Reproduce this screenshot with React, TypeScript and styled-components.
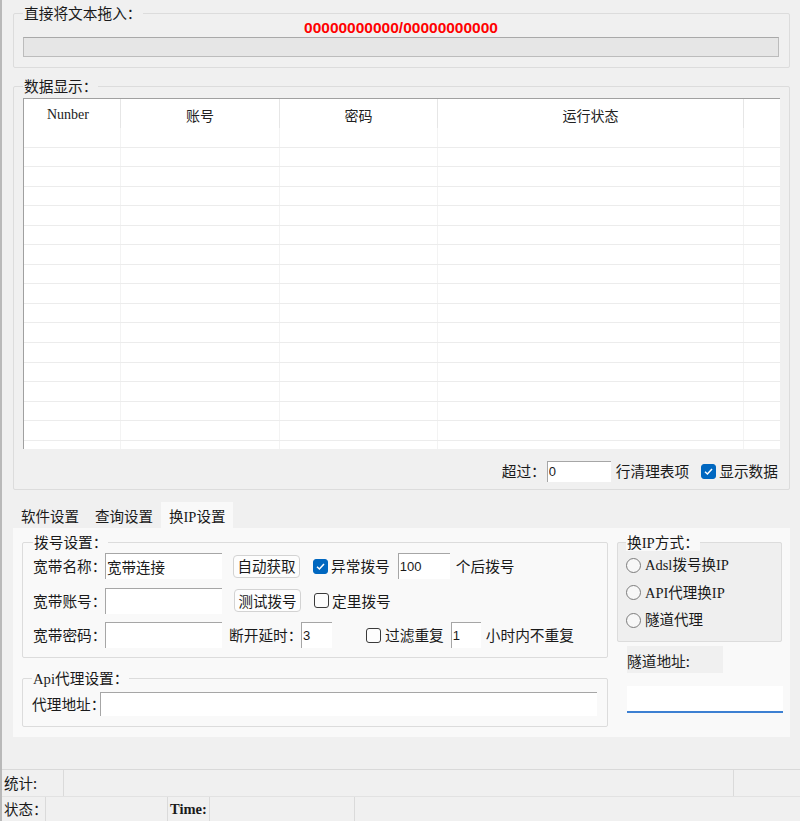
import styled, { createGlobalStyle } from 'styled-components';

const cjk = `"Noto Sans CJK SC", "Noto Sans", sans-serif`;
const serif = `"Liberation Serif", "Noto Sans CJK SC", serif`;

const GlobalStyle = createGlobalStyle`
  html, body {
    margin: 0;
    padding: 0;
    background: #f0f0f0;
  }
  #root {
    height: 821px;
  }
  * {
    box-sizing: border-box;
  }
`;

const Window = styled.div`
  width: 800px;
  height: 821px;
  display: flex;
  flex-direction: column;
  border-left: 2px solid #b9b9b9;
  background: #f0f0f0;
  font-family: ${cjk};
  font-size: 14.7px;
  color: #1a1a1a;
  overflow: hidden;
`;

const Content = styled.main`
  flex: 1;
  display: flex;
  flex-direction: column;
  padding: 5px 10px 0 11px;
`;

const Group = styled.fieldset<{ $pad: string; $bg?: string; $mt?: number }>`
  margin: ${(p) => p.$mt ?? 0}px 0 0 0;
  min-width: 0;
  padding: ${(p) => p.$pad};
  border: 1px solid #dcdcdc;
  border-radius: 2px;
  background: ${(p) => p.$bg ?? 'transparent'};
`;

const Legend = styled.legend<{ $bg?: string }>`
  padding: 0 1px;
  line-height: 16px;
  font-size: 14.7px;
  white-space: nowrap;
  background: ${(p) => p.$bg ?? 'transparent'};
`;

const Latin = styled.span<{ $bold?: boolean }>`
  font-family: ${serif};
  font-weight: ${(p) => (p.$bold ? 'bold' : 'normal')};
`;

const Counter = styled.div`
  text-align: center;
  color: #ff0000;
  font-family: "Liberation Sans", Arial, sans-serif;
  font-weight: bold;
  font-size: 15.5px;
  line-height: 13px;
`;

const Progress = styled.div`
  margin-top: 3px;
  height: 20px;
  border: 1px solid #bcbcbc;
  border-top-color: #a9a9a9;
  background: #e6e6e6;
`;

const cols = '97px 159px 158px 306px 1fr';

const Table = styled.div`
  height: 351px;
  border-top: 1px solid #a0a0a0;
  border-left: 1px solid #a0a0a0;
  background: #fff;
  overflow: hidden;
`;

const HeadRow = styled.div`
  display: grid;
  grid-template-columns: ${cols};
  height: 29px;
`;

const HeadCell = styled.div<{ $last?: boolean; $serif?: boolean }>`
  border-right: ${(p) => (p.$last ? 'none' : '1px solid #e6e6e6')};
  padding: 6px ${(p) => (p.$serif ? 8 : 0)}px 0 0;
  line-height: 20px;
  text-align: center;
  font-family: ${(p) => (p.$serif ? serif : cjk)};
  font-size: 14px;
  color: #222;
`;

const BodyRow = styled.div`
  display: grid;
  grid-template-columns: ${cols};
  height: 19.55px;
  border-bottom: 1px solid #ececec;
`;

const BodyCell = styled.div<{ $last?: boolean }>`
  border-right: ${(p) => (p.$last ? 'none' : '1px solid #f3f3f3')};
`;

const Row = styled.div<{ $h?: number; $end?: boolean; $mt?: number }>`
  display: flex;
  align-items: center;
  justify-content: ${(p) => (p.$end ? 'flex-end' : 'flex-start')};
  height: ${(p) => p.$h ?? 26}px;
  margin-top: ${(p) => p.$mt ?? 0}px;
  white-space: nowrap;
`;

const Rows = styled.div<{ $gap: number }>`
  display: flex;
  flex-direction: column;
  gap: ${(p) => p.$gap}px;
`;

const Label = styled.span<{ $w?: number; $ml?: number }>`
  flex: none;
  width: ${(p) => (p.$w ? `${p.$w}px` : 'auto')};
  margin-left: ${(p) => p.$ml ?? 0}px;
  line-height: 20px;
  white-space: nowrap;
`;

const TextBox = styled.input<{ $w: number; $h?: number; $ml?: number }>`
  flex: none;
  width: ${(p) => p.$w}px;
  height: ${(p) => p.$h ?? 26}px;
  margin: 0 0 0 ${(p) => p.$ml ?? 0}px;
  padding: 0 1px;
  border: none;
  border-top: 1px solid #a6a6a6;
  border-left: 1px solid #a6a6a6;
  background: #fff;
  outline: none;
  font-family: ${cjk};
  font-size: 14.5px;
  color: #1a1a1a;
`;

const NumBox = styled(TextBox)`
  font-family: "Liberation Sans", Arial, sans-serif;
  font-size: 13px;
`;

const Button = styled.button<{ $ml: number }>`
  flex: none;
  width: 67px;
  height: 23px;
  margin-left: ${(p) => p.$ml}px;
  padding: 0;
  border: 1px solid #d3d3d3;
  border-radius: 4px;
  background: #fdfdfd;
  font-family: ${cjk};
  font-size: 14.5px;
  line-height: 20px;
  color: #1a1a1a;
`;

const Box = styled.span<{ $checked?: boolean; $ml?: number }>`
  flex: none;
  display: inline-flex;
  align-items: center;
  justify-content: center;
  width: 15px;
  height: 15px;
  margin-left: ${(p) => p.$ml ?? 0}px;
  border-radius: 3px;
  border: 1px solid ${(p) => (p.$checked ? '#0067c0' : '#3a3a3a')};
  background: ${(p) => (p.$checked ? '#0067c0' : '#fdfdfd')};
`;

const Check = ({ checked, ml }: { checked?: boolean; ml?: number }) => (
  <Box $checked={checked} $ml={ml}>
    {checked && (
      <svg width="11" height="11" viewBox="0 0 11 11">
        <path d="M2 5.8 L4.4 8 L9 3" fill="none" stroke="#fff" strokeWidth="1.5" />
      </svg>
    )}
  </Box>
);

const TabStrip = styled.div`
  display: flex;
  margin-top: 12px;
`;

const Tab = styled.div<{ $active?: boolean }>`
  padding: 4px 8px 1px;
  line-height: 20px;
  font-size: 14.5px;
  white-space: nowrap;
  background: ${(p) => (p.$active ? '#f9f9f9' : 'transparent')};
`;

const Panel = styled.section`
  display: flex;
  gap: 9px;
  padding: 6px 8px 10px 9px;
  background: #f9f9f9;
`;

const LeftCol = styled.div`
  width: 586px;
  display: flex;
  flex-direction: column;
`;

const RightCol = styled.div`
  width: 165px;
  display: flex;
  flex-direction: column;
`;

const Radio = styled.span`
  flex: none;
  width: 15px;
  height: 15px;
  border-radius: 50%;
  border: 1px solid #7c7c7c;
  background: #f7f7f7;
  margin-right: 4px;
`;

const RadioText = styled.span`
  font-family: ${serif};
  font-size: 14.5px;
  line-height: 20px;
  white-space: nowrap;
`;

const TunnelLabel = styled.div`
  width: 96px;
  height: 27px;
  margin: 4px 0 0 10px;
  padding-top: 3px;
  line-height: 24px;
  background: #f0f0f0;
  color: #222;
  white-space: nowrap;
`;

const TunnelInput = styled.input`
  width: 156px;
  height: 27px;
  margin: 13px 0 0 10px;
  border: none;
  border-bottom: 2px solid #3d80d2;
  background: #fff;
  outline: none;
`;

const StatusBar = styled.footer`
  flex: none;
  border-top: 1px solid #d9d9d9;
`;

const StatusRow = styled.div<{ $h: number; $line?: boolean }>`
  display: flex;
  height: ${(p) => p.$h}px;
  border-top: ${(p) => (p.$line ? '1px solid #e2e2e2' : 'none')};
`;

const StatusCell = styled.div<{ $w?: number; $line?: boolean }>`
  flex: ${(p) => (p.$w ? 'none' : '1')};
  width: ${(p) => (p.$w ? `${p.$w}px` : 'auto')};
  display: flex;
  align-items: center;
  padding-left: 2px;
  border-left: ${(p) => (p.$line ? '1px solid #dadada' : 'none')};
  line-height: 20px;
  font-size: 14.5px;
  white-space: nowrap;
`;

const rows = Array.from({ length: 17 }, (_, i) => i);

const App = () => {
  return (
    <>
      <GlobalStyle />
      <Window>
        <Content>
          <Group $pad="0 10px 10px 9px">
            <Legend>直接将文本拖入：</Legend>
            <Counter>00000000000/00000000000</Counter>
            <Progress />
          </Group>

          <Group $pad="4px 9px 7px 9px" $mt={10}>
            <Legend>数据显示：</Legend>
            <Table>
              <HeadRow>
                <HeadCell $serif>Nunber</HeadCell>
                <HeadCell>账号</HeadCell>
                <HeadCell>密码</HeadCell>
                <HeadCell>运行状态</HeadCell>
                <HeadCell $last />
              </HeadRow>
              {rows.map((r) => (
                <BodyRow key={r}>
                  <BodyCell />
                  <BodyCell />
                  <BodyCell />
                  <BodyCell />
                  <BodyCell $last />
                </BodyRow>
              ))}
            </Table>
            <Row $h={22} $mt={11} $end style={{ paddingRight: 2 }}>
              <Label>超过：</Label>
              <NumBox $w={64} $h={21} $ml={1} readOnly value="0" />
              <Label $ml={5}>行清理表项</Label>
              <Check checked ml={12} />
              <Label $ml={3}>显示数据</Label>
            </Row>
          </Group>

          <TabStrip>
            <Tab>软件设置</Tab>
            <Tab>查询设置</Tab>
            <Tab $active>
              换<Latin>IP</Latin>设置
            </Tab>
          </TabStrip>

          <Panel>
            <LeftCol>
              <Group $pad="3px 10px 9px 10px">
                <Legend $bg="#f9f9f9">拨号设置：</Legend>
                <Rows $gap={8.5}>
                  <Row>
                    <Label $w={72}>宽带名称：</Label>
                    <TextBox $w={117} readOnly value="宽带连接" />
                    <Button $ml={11}>自动获取</Button>
                    <Check checked ml={13} />
                    <Label $ml={3}>异常拨号</Label>
                    <NumBox $w={52} $ml={8} readOnly value="100" />
                    <Label $ml={6}>个后拨号</Label>
                  </Row>
                  <Row>
                    <Label $w={72}>宽带账号：</Label>
                    <TextBox $w={117} readOnly value="" />
                    <Button $ml={12}>测试拨号</Button>
                    <Check ml={13} />
                    <Label $ml={3}>定里拨号</Label>
                  </Row>
                  <Row>
                    <Label $w={72}>宽带密码：</Label>
                    <TextBox $w={117} readOnly value="" />
                    <Label $w={72} $ml={7}>断开延时：</Label>
                    <NumBox $w={31} readOnly value="3" />
                    <Check ml={34} />
                    <Label $ml={4}>过滤重复</Label>
                    <NumBox $w={30} $ml={7} readOnly value="1" />
                    <Label $ml={5}>小时内不重复</Label>
                  </Row>
                </Rows>
              </Group>

              <Group $pad="5px 10px 10px 9px" $mt={12}>
                <Legend $bg="#f9f9f9">
                  <Latin>Api</Latin>代理设置：
                </Legend>
                <Row $h={24}>
                  <Label $w={68}>代理地址：</Label>
                  <TextBox $w={497} $h={24} readOnly value="" />
                </Row>
              </Group>
            </LeftCol>

            <RightCol>
              <Group $pad="2px 8px 9px 8px" $bg="#efefef">
                <Legend $bg="#f9f9f9">
                  换<Latin>IP</Latin>方式：
                </Legend>
                <Rows $gap={3.5}>
                  <Row $h={24}>
                    <Radio />
                    <RadioText>Adsl拨号换IP</RadioText>
                  </Row>
                  <Row $h={24}>
                    <Radio />
                    <RadioText>API代理换IP</RadioText>
                  </Row>
                  <Row $h={24}>
                    <Radio />
                    <RadioText>隧道代理</RadioText>
                  </Row>
                </Rows>
              </Group>
              <TunnelLabel>隧道地址:</TunnelLabel>
              <TunnelInput readOnly value="" />
            </RightCol>
          </Panel>
        </Content>

        <StatusBar>
          <StatusRow $h={26}>
            <StatusCell $w={61}>统计:</StatusCell>
            <StatusCell $w={670} $line />
            <StatusCell $line />
          </StatusRow>
          <StatusRow $h={25} $line>
            <StatusCell $w={43}>状态：</StatusCell>
            <StatusCell $w={122} $line />
            <StatusCell $w={42} $line>
              <Latin $bold>Time:</Latin>
            </StatusCell>
            <StatusCell $w={145} $line />
            <StatusCell $line />
          </StatusRow>
        </StatusBar>
      </Window>
    </>
  );
};

export default App;
